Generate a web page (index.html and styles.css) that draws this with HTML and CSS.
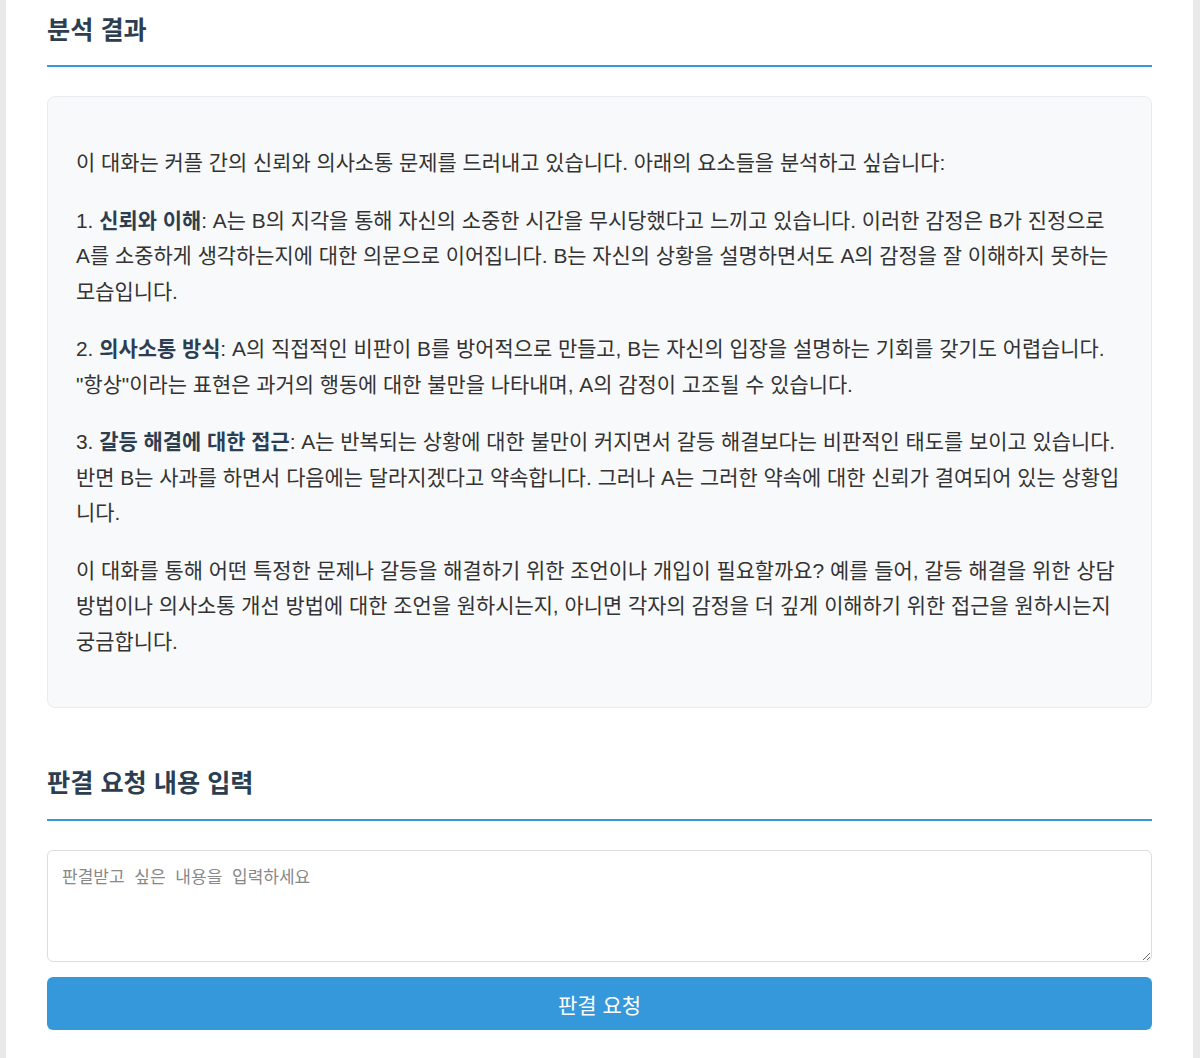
FILE: index.html
```html
<!DOCTYPE html>
<html lang="ko">
<head>
<meta charset="utf-8">
<title>분석 결과</title>
<link rel="stylesheet" href="styles.css">
</head>
<body>
<div class="page">
  <section class="section">
    <h2 class="section-title">분석 결과</h2>
    <div class="result">
      <p>이 대화는 커플 간의 신뢰와 의사소통 문제를 드러내고 있습니다. 아래의 요소들을 분석하고 싶습니다:</p>
      <p>1. <strong>신뢰와 이해</strong>: A는 B의 지각을 통해 자신의 소중한 시간을 무시당했다고 느끼고 있습니다. 이러한 감정은 B가 진정으로 A를 소중하게 생각하는지에 대한 의문으로 이어집니다. B는 자신의 상황을 설명하면서도 A의 감정을 잘 이해하지 못하는 모습입니다.</p>
      <p>2. <strong>의사소통 방식</strong>: A의 직접적인 비판이 B를 방어적으로 만들고, B는 자신의 입장을 설명하는 기회를 갖기도 어렵습니다. "항상"이라는 표현은 과거의 행동에 대한 불만을 나타내며, A의 감정이 고조될 수 있습니다.</p>
      <p>3. <strong>갈등 해결에 대한 접근</strong>: A는 반복되는 상황에 대한 불만이 커지면서 갈등 해결보다는 비판적인 태도를 보이고 있습니다. 반면 B는 사과를 하면서 다음에는 달라지겠다고 약속합니다. 그러나 A는 그러한 약속에 대한 신뢰가 결여되어 있는 상황입니다.</p>
      <p>이 대화를 통해 어떤 특정한 문제나 갈등을 해결하기 위한 조언이나 개입이 필요할까요? 예를 들어, 갈등 해결을 위한 상담 방법이나 의사소통 개선 방법에 대한 조언을 원하시는지, 아니면 각자의 감정을 더 깊게 이해하기 위한 접근을 원하시는지 궁금합니다.</p>
    </div>
  </section>
  <section class="section">
    <h2 class="section-title">판결 요청 내용 입력</h2>
    <textarea class="request-input" placeholder="판결받고 싶은 내용을 입력하세요"></textarea>
    <button class="submit-btn" type="button">판결 요청</button>
  </section>
</div>
</body>
</html>
```
FILE: styles.css
```css
html, body {
  margin: 0;
  padding: 0;
}
body {
  background: #e9e9e9;
  font-family: "Liberation Sans", "Noto Sans CJK KR", sans-serif;
  color: #333;
}
.page {
  background: #fff;
  margin: 0 7px 0 6px;
  padding: 14px 41px 40px 41px;
  min-height: 1100px;
}
.section + .section {
  margin-top: 59px;
}
.section + .section .section-title {
  padding-bottom: 24px;
}
.section-title {
  margin: 0 0 29px 0;
  font-family: "Noto Sans CJK KR", sans-serif;
  font-size: 25.2px;
  font-weight: 700;
  line-height: 28px;
  color: #2c3e50;
  padding-bottom: 23px;
  border-bottom: 2px solid #3498db;
}
.result {
  background: #f8f9fa;
  border: 1px solid #e9ecef;
  border-radius: 8px;
  padding: 26px 28px;
  font-size: 20.9px;
  line-height: 35.5px;
}
.result p {
  margin: 22px 0;
}
.result strong {
  color: #2c3e50;
  font-weight: 700;
}
.request-input {
  display: block;
  box-sizing: border-box;
  width: 100%;
  height: 112px;
  padding: 12px 14px;
  border: 1px solid #ddd;
  border-radius: 6px;
  font-family: "Noto Sans CJK KR", sans-serif;
  font-size: 17px;
  word-spacing: 5px;
  color: #333;
  margin: 0;
}
.request-input::placeholder {
  color: #888;
}
.submit-btn {
  display: block;
  width: 100%;
  height: 53px;
  margin-top: 15px;
  border: none;
  border-radius: 6px;
  background: #3498db;
  color: #fff;
  font-family: "Noto Sans CJK KR", sans-serif;
  font-size: 21px;
  cursor: pointer;
}
```
